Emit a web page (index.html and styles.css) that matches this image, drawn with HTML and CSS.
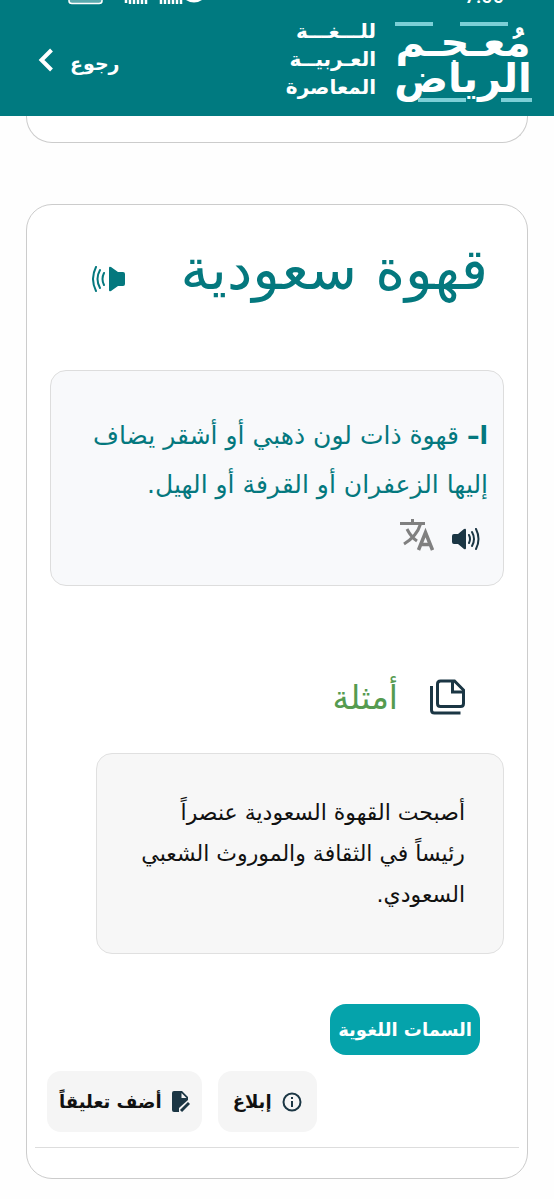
FILE: index.html
```html
<!DOCTYPE html>
<html lang="ar" dir="rtl">
<head>
    <meta charset="utf-8">
    <meta name="viewport" content="width=device-width, initial-scale=1">
    <title>معجم الرياض</title>
    <link rel="stylesheet" href="styles.css">
</head>
<body>
    <header class="header">
        <div class="status" dir="ltr">
            <svg class="status-icons" width="150" height="5" viewBox="0 0 150 5" aria-hidden="true">
                <path d="M13 0v1q0 2.500 3 2.500h27q3 0 3-2.500v-1" fill="#5aa9ad" stroke="#fff" stroke-width="1.500"/>
                <path d="M70 0v3M74 0v4M78 0v4M82 0v4M86 0v4M90 0v4M105 0v4M109 0v4M113 0v4M117 0v4M121 0v4M125 0v4" stroke="#fff" stroke-width="2.500"/>
                <path d="M130 0q8 5 16 0z" fill="#fff"/>
            </svg>
            <span class="status-time">7:00</span>
        </div>
        <div class="header-main">
            <div class="brand">
                <div class="logo">
                    <span class="bars bars-top"><i class="bar bar-long"></i><i class="bar"></i></span>
                    <span class="logo-line">مُعـجـم</span>
                    <span class="logo-line">الرياض</span>
                    <span class="bars bars-bottom"><i class="bar bar-short"></i><i class="bar bar-long"></i></span>
                </div>
                <div class="tagline">
                    <span>للـــغـــة</span>
                    <span>العـربيــة</span>
                    <span>المعاصرة</span>
                </div>
            </div>
            <a class="back" href="#">
                <span>رجوع</span>
                <svg width="16" height="24" viewBox="0 0 16 24" aria-hidden="true">
                    <path d="M13.500 2L3.500 12l10 10" fill="none" stroke="#fff" stroke-width="4"/>
                </svg>
            </a>
        </div>
    </header>

    <main>
        <section class="card card-previous"></section>

        <article class="card">
            <div class="word-row">
                <h1>قهوة سعودية</h1>
                <button type="button" class="icon-button" aria-label="استماع">
                    <svg width="34" height="26" viewBox="0 0 34 26" aria-hidden="true">
                        <path d="M17 2q0-2 2-1l7 5h5q2 0 2 2v10q0 2-2 2h-5l-7 5q-2 1-2-1z" fill="#04787e"/>
                        <path d="M12 7q-3 6 0 12M8 4q-5 9 0 18M4 1q-6 12 0 24" fill="none" stroke="#04787e" stroke-width="2" stroke-linecap="round"/>
                    </svg>
                </button>
            </div>

            <div class="definition">
                <p><b>ا–</b> قهوة ذات لون ذهبي أو أشقر يضاف إليها الزعفران أو القرفة أو الهيل.</p>
                <div class="tools">
                    <button type="button" class="icon-button" aria-label="استماع للتعريف">
                        <svg width="28" height="22" viewBox="0 0 28 22" aria-hidden="true">
                            <path d="M14 2q0-2-2-1L6 6H2Q0 6 0 8v6q0 2 2 2h4l6 5q2 1 2-1z" fill="#1b3644"/>
                            <path d="M17 7q2 4 0 8M20 4q4 7 0 14M24 1q5 10 0 20" fill="none" stroke="#1b3644" stroke-width="2" stroke-linecap="round"/>
                        </svg>
                    </button>
                    <button type="button" class="icon-button" aria-label="ترجمة">
                        <svg class="translate" width="34" height="32" viewBox="0 0 34 32" aria-hidden="true">
                            <path d="M0 4.500h25M12.500 0v4.500M20.500 5Q17 17 4 25M7 10q4 8 10 12" fill="none" stroke="#808080" stroke-width="3"/>
                            <path d="M18.500 31L25.500 13.500L32.500 31M21 25.500h9" fill="none" stroke="#808080" stroke-width="3.500"/>
                        </svg>
                    </button>
                </div>
            </div>

            <div class="examples-head">
                <svg width="36" height="36" viewBox="0 0 36 36" aria-hidden="true">
                    <path d="M1.500 7v24q0 3 3 3h26" fill="none" stroke="#1b3644" stroke-width="3"/>
                    <path d="M10.500 2h14l9 9v13.500q0 3-3 3h-20q-3 0-3-3V5q0-3 3-3z" fill="none" stroke="#1b3644" stroke-width="3"/>
                    <path d="M22.500 2v11h11" fill="none" stroke="#1b3644" stroke-width="3"/>
                </svg>
                <h2>أمثلة</h2>
            </div>
            <div class="example">
                <p>أصبحت القهوة السعودية عنصراً رئيساً في الثقافة والموروث الشعبي السعودي.</p>
            </div>

            <button type="button" class="features">السمات اللغوية</button>

            <div class="actions">
                <button type="button" class="action">
                    <svg width="20" height="20" viewBox="0 0 20 20" aria-hidden="true">
                        <circle cx="10" cy="10" r="8.500" fill="none" stroke="#1b3644" stroke-width="2"/>
                        <path d="M10 9v6M10 5v2" stroke="#1b3644" stroke-width="2"/>
                    </svg>
                    إبلاغ
                </button>
                <button type="button" class="action">
                    <svg width="18" height="22" viewBox="0 0 18 22" aria-hidden="true">
                        <path d="M2 0h8l6 6v3l-9 8v4H2q-2 0-2-2V2q0-2 2-2z" fill="#1b3644"/>
                        <path d="M9.500 2v5h5z" fill="#f5f5f5"/>
                        <path d="M9 20l8-8" stroke="#1b3644" stroke-width="3"/>
                    </svg>
                    أضف تعليقاً
                </button>
            </div>
            <hr>
        </article>
    </main>
</body>
</html>
```

FILE: styles.css
```css
* {
    box-sizing: border-box;
}

body {
    margin: 0;
    background-color: #fefefe;
    color: #111;
    font-family: "DejaVu Sans", sans-serif;
}

h1, h2, p {
    margin: 0;
    font-weight: normal;
}

button {
    border: none;
    font-family: inherit;
    cursor: pointer;
}

.header {
    background-color: #007a80;
    color: #fff;
    height: 116px;
}

.status {
    display: flex;
    justify-content: space-between;
    height: 5px;
    padding: 0 50px 0 56px;
    overflow: hidden;
}

.status-time {
    font-family: Roboto, sans-serif;
    font-size: 20px;
    font-weight: 500;
    line-height: 20px;
    margin-top: -14px;
}

.header-main {
    display: flex;
    justify-content: space-between;
    padding: 12px 22px 0 38px;
}

.brand {
    display: flex;
    gap: 18px;
}

.logo {
    display: flex;
    flex-direction: column;
    width: 138px;
    padding-top: 5px;
    font-size: 40px;
    font-weight: bold;
    text-align: center;
    white-space: nowrap;
}

.logo-line {
    height: 36px;
    line-height: 32px;
}

.bars {
    display: flex;
}

.bars-top {
    gap: 27px;
    padding-right: 24px;
}

.bars-bottom {
    gap: 35px;
}

.bar {
    width: 38px;
    height: 4px;
    background-color: #7ccfd6;
}

.bar-long {
    width: 48px;
}

.bar-short {
    width: 31px;
}

.tagline {
    display: flex;
    flex-direction: column;
    width: 86px;
    font-size: 20px;
    font-weight: bold;
    line-height: 28px;
    white-space: nowrap;
}

.back {
    display: flex;
    align-items: center;
    gap: 16px;
    height: 86px;
    color: #fff;
    font-size: 19px;
    font-weight: bold;
    text-decoration: none;
}

.back span {
    padding-top: 6px;
}

.card {
    margin: 0 26px 20px;
    padding: 24px 23px 30px;
    border: 1px solid #ccc;
    border-radius: 26px;
    background-color: #fff;
}

.card-previous {
    height: 27px;
    margin-bottom: 61px;
    padding: 0;
    border-top: none;
    border-radius: 0 0 26px 26px;
}

.word-row {
    display: flex;
    justify-content: space-between;
    align-items: center;
    height: 100px;
    padding: 0 16px 0 42px;
}

.word-row h1 {
    padding-bottom: 20px;
    color: #04787e;
    font-size: 57px;
    line-height: 80px;
}

.icon-button {
    display: flex;
    padding: 0;
    background: none;
}

.definition {
    margin-top: 41px;
    padding: 40px 15px 16px;
    border: 1px solid #ddd;
    border-radius: 16px;
    background-color: #f8f9fb;
}

.definition p {
    color: #04787e;
    font-size: 25px;
    line-height: 49px;
}

.tools {
    display: flex;
    align-items: center;
    gap: 18px;
    height: 60px;
    padding-right: 8px;
}

.translate {
    margin-bottom: 8px;
}

.examples-head {
    display: flex;
    align-items: center;
    gap: 32px;
    height: 60px;
    margin-top: 81px;
    padding-right: 38px;
}

.examples-head h2 {
    color: #559b50;
    font-size: 33px;
}

.example {
    margin: 26px 0 0 46px;
    padding: 38px 38px 38px 30px;
    border: 1px solid #e0e0e0;
    border-radius: 16px;
    background-color: #f7f7f7;
}

.example p {
    font-size: 22px;
    line-height: 41px;
}

.features {
    display: block;
    height: 51px;
    margin: 50px 24px 0 0;
    padding: 0 8px;
    border-radius: 16px;
    background-color: #05a3ab;
    color: #fff;
    font-size: 18px;
    font-weight: bold;
}

.actions {
    display: flex;
    justify-content: flex-end;
    gap: 16px;
    margin: 16px 0 0 -3px;
}

.action {
    display: flex;
    align-items: center;
    justify-content: center;
    gap: 10px;
    min-width: 99px;
    height: 61px;
    padding: 0 12px;
    border-radius: 14px;
    background-color: #f5f5f5;
    color: #111;
    font-size: 18px;
    font-weight: bold;
}

hr {
    margin: 15px -15px 0;
    border: none;
    border-top: 1px solid #ddd;
}
```
